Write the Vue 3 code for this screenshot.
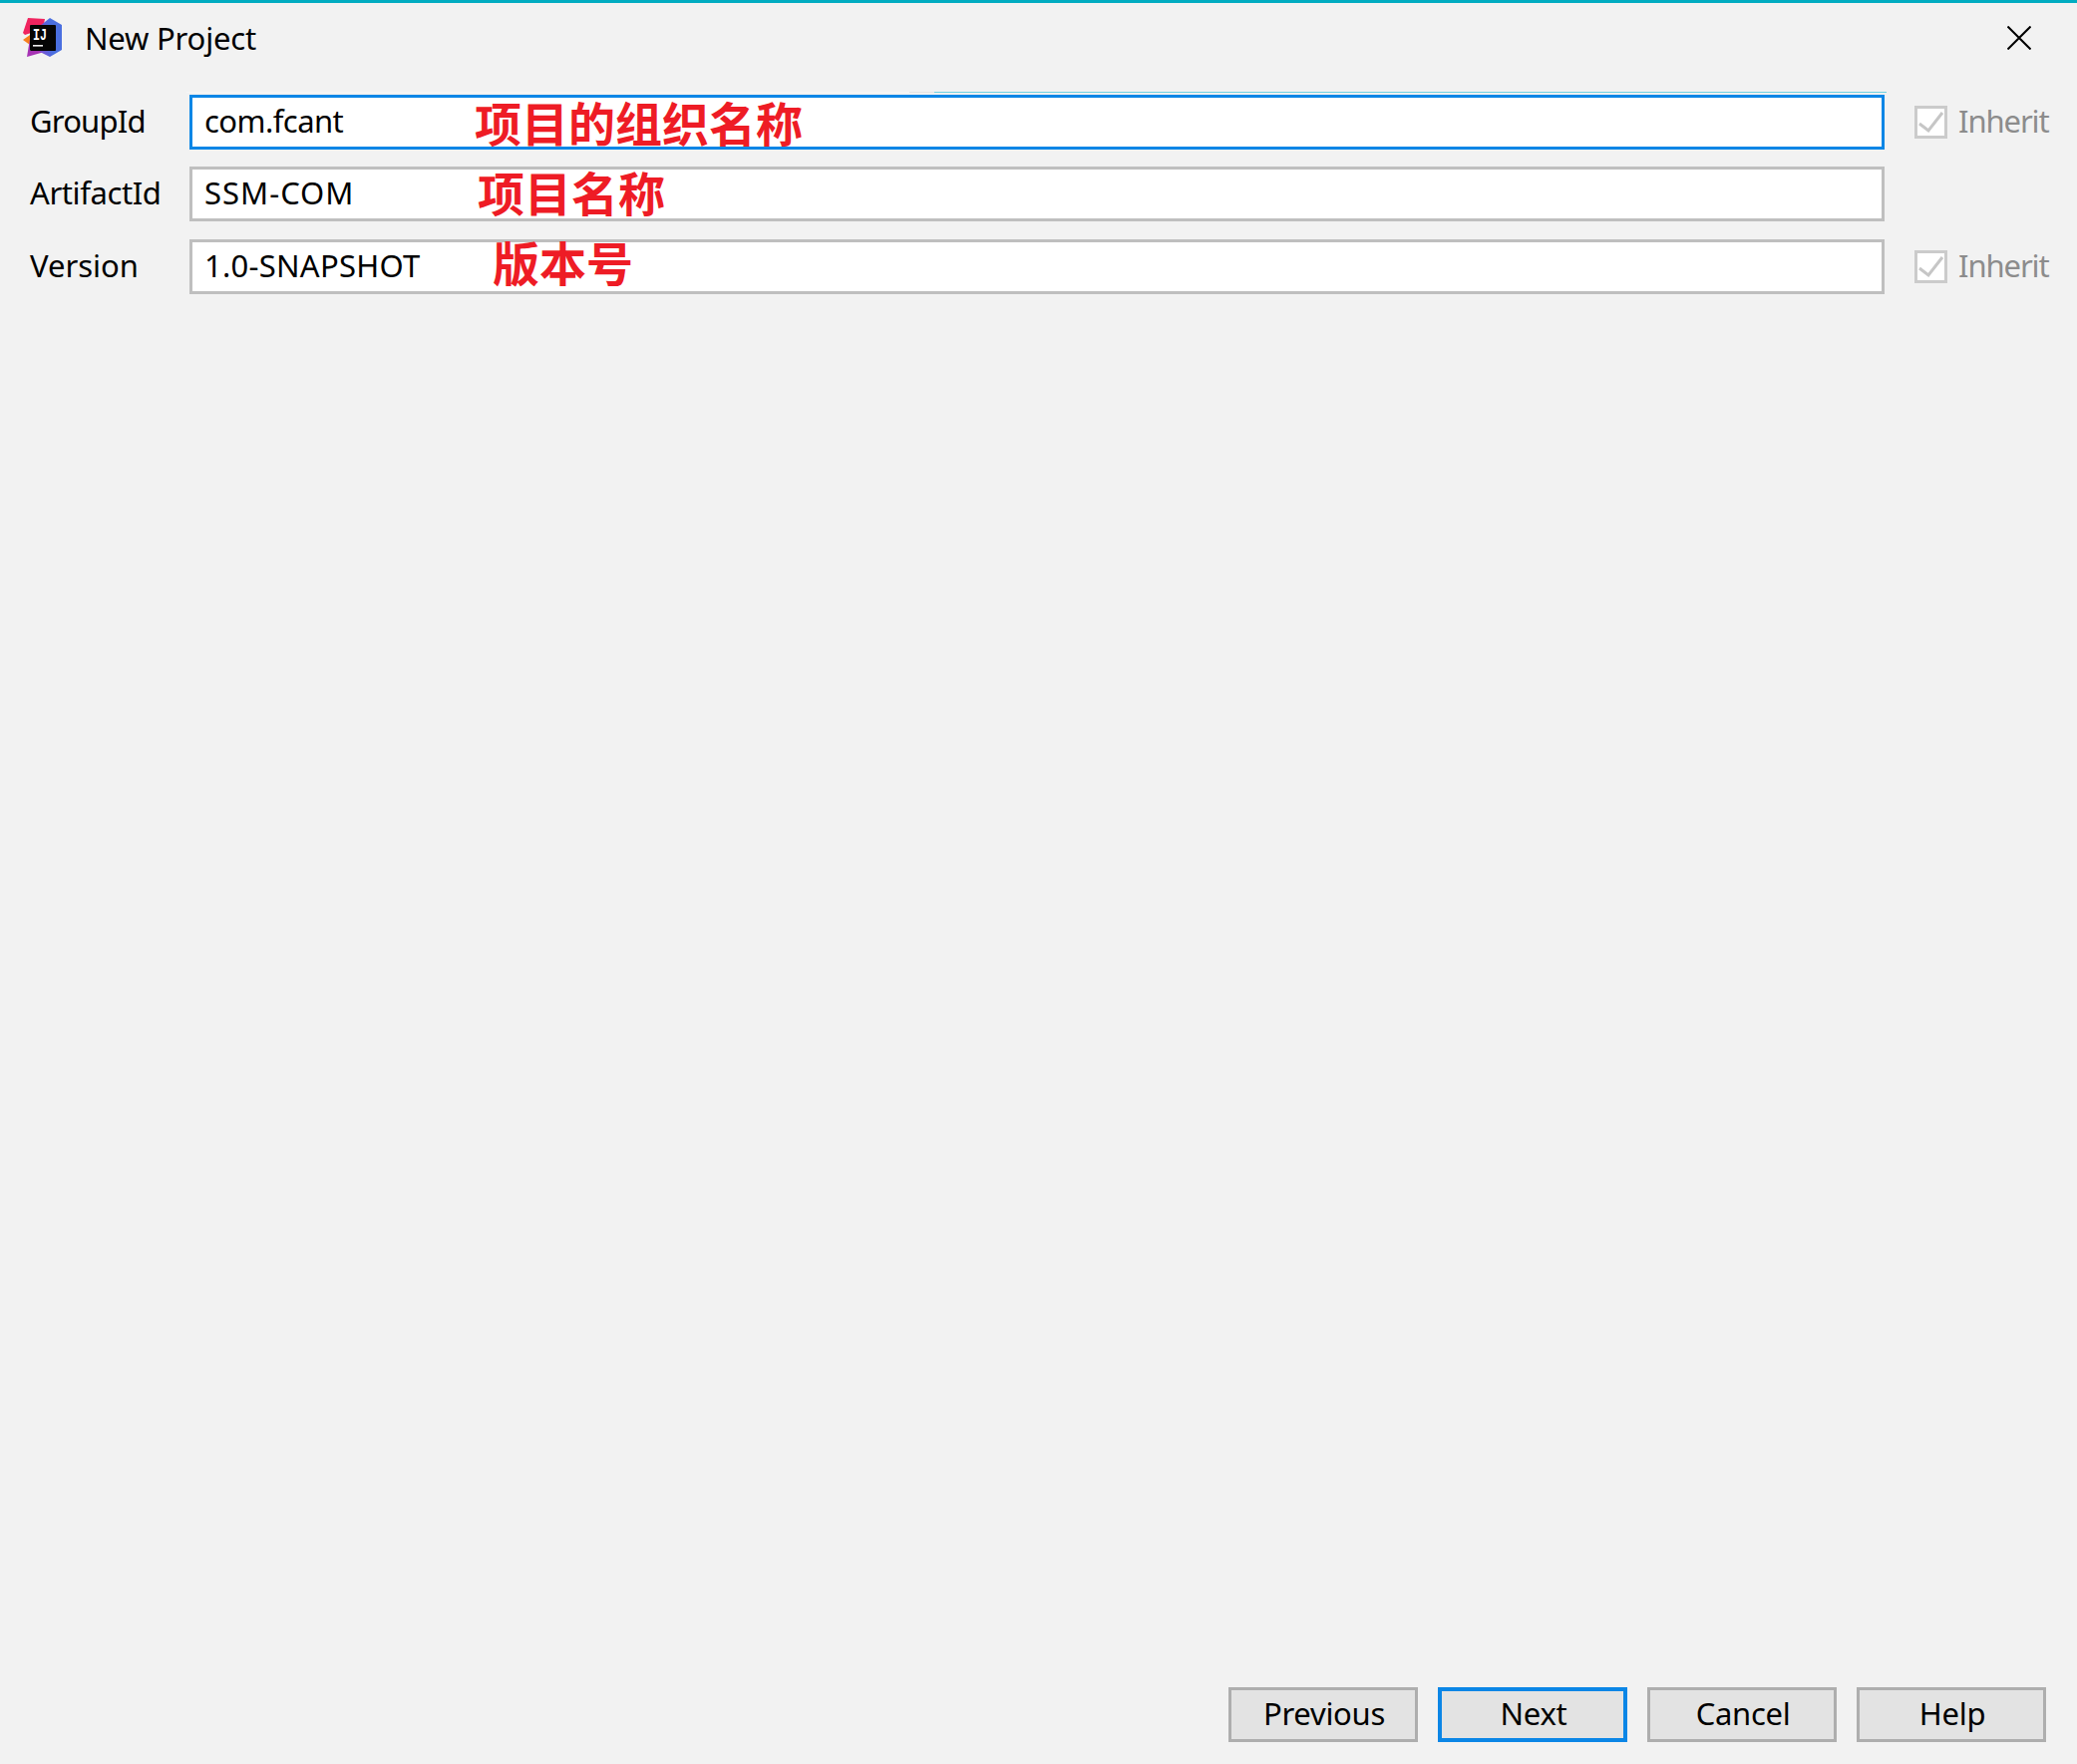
<template>
  <div class="dialog">
    <div class="titlebar">
      <svg class="logo" width="40" height="40" viewBox="0 0 40 40">
        <defs>
          <linearGradient id="ij-blue" x1="0" y1="0.6" x2="1" y2="0.4">
            <stop offset="0" stop-color="#7a4fd0" />
            <stop offset="0.5" stop-color="#4a6fe0" />
          </linearGradient>
        </defs>
        <polygon points="5,1 22,2 20,12 2,18 0,16" fill="#f0245f" />
        <polygon points="0,23 7,18 7,28" fill="#f7801e" />
        <polygon points="7,22 4,40 25,34 7,34" fill="#a633b4" />
        <polygon points="27,1 39,8 39,33 27,40 17,35 17,9" fill="url(#ij-blue)" />
        <rect x="7" y="8" width="26" height="26" rx="1" fill="#050505" />
        <text x="10" y="23" class="logo-text" textLength="14" lengthAdjust="spacingAndGlyphs">IJ</text>
        <rect x="10" y="28" width="10" height="1.6" fill="#eee" />
      </svg>
      <span class="title">New Project</span>
      <svg class="close" width="24" height="24" viewBox="0 0 24 24">
        <path d="M0.5 0.5L23.5 23.5M23.5 0.5L0.5 23.5" stroke="#000" stroke-width="2" fill="none" />
      </svg>
    </div>

    <div class="form">
      <div class="edge"></div>
      <div v-for="row in rows" :key="row.label" class="row">
        <label class="label" :class="row.labelClass">{{ row.label }}</label>
        <div class="field" :class="{ focused: row.focused }">
          <span class="value" :class="row.valueClass">{{ row.value }}</span>
          <span class="note" :style="{ left: row.noteLeft + 'px', top: row.noteTop + 'px' }">{{ row.note }}</span>
        </div>
        <div v-if="row.inherit" class="inherit">
          <svg class="check" width="33" height="33" viewBox="0 0 33 33">
            <rect x="1.5" y="1.5" width="30" height="30" fill="#fff" stroke="#cbcbcb" stroke-width="3" />
            <path d="M5 18L14 25L28 7" fill="none" stroke="#c6c6c6" stroke-width="3" />
          </svg>
          <span class="inherit-text">Inherit</span>
        </div>
      </div>
    </div>

    <div class="footer">
      <button v-for="b in buttons" :key="b" class="btn" :class="{ primary: b === 'Next' }">
        <span class="btn-text">{{ b }}</span>
      </button>
    </div>
  </div>
</template>

<script setup>
const rows = [
  { label: 'GroupId', labelClass: 'tight', value: 'com.fcant', valueClass: 'tight', note: '项目的组织名称', noteLeft: 283, noteTop: -3, inherit: true, focused: true },
  { label: 'ArtifactId', labelClass: '', value: 'SSM-COM', valueClass: 'wide', note: '项目名称', noteLeft: 286, noteTop: -5, inherit: false },
  { label: 'Version', labelClass: 'plain', value: '1.0-SNAPSHOT', valueClass: 'caps', note: '版本号', noteLeft: 301, noteTop: -8, inherit: true },
]

const buttons = ['Previous', 'Next', 'Cancel', 'Help']
</script>

<style>
html,
body {
  background: #f2f2f2;
}
</style>

<style scoped>
.dialog {
  display: flex;
  flex-direction: column;
  width: 2083px;
  height: 1769px;
  box-sizing: border-box;
  border-top: 3px solid #00acc1;
  background: #f2f2f2;
  color: #000;
  font-family: "Noto Sans", "Open Sans", sans-serif;
  font-size: 31px;
}

.titlebar {
  display: flex;
  align-items: center;
  height: 74px;
  padding: 0 46px 0 23px;
}

.logo {
  flex: none;
  margin-bottom: 6px;
}

.logo-text {
  font-family: "Liberation Mono", monospace;
  font-size: 17px;
  font-weight: 700;
  fill: #fff;
}

.title {
  margin-left: 22px;
  margin-bottom: 5px;
  letter-spacing: -0.2px;
}

.close {
  margin-left: auto;
  margin-bottom: 5px;
}

.form {
  position: relative;
  margin-top: 18px;
  padding-left: 30px;
}

.edge {
  position: absolute;
  top: -3px;
  left: 187px;
  width: 1705px;
  height: 1px;
  background: linear-gradient(to right, #f7f7f7 725px, #e4e4e4 725px, #e4e4e4 750px, #6fd1e2 750px);
}

.row {
  display: flex;
  align-items: center;
  height: 55px;
}

.row + .row {
  margin-top: 17px;
}

.row:last-child {
  margin-top: 18px;
}

.label {
  width: 160px;
  flex: none;
  padding-bottom: 3px;
  letter-spacing: -0.4px;
}

.label.tight {
  letter-spacing: -0.8px;
}

.label.plain {
  letter-spacing: 0;
}

.field {
  position: relative;
  display: flex;
  align-items: center;
  width: 1700px;
  height: 55px;
  flex: none;
  box-sizing: border-box;
  padding-left: 12px;
  border: 3px solid #bfbfbf;
  background: #fff;
}

.field.focused {
  border-color: #0b86e6;
}

.value {
  padding-bottom: 3px;
}

.value.tight {
  letter-spacing: -0.55px;
}

.value.wide {
  letter-spacing: 1px;
}

.value.caps {
  letter-spacing: 0.25px;
}

.note {
  position: absolute;
  font-family: "Noto Sans CJK SC", sans-serif;
  font-size: 47px;
  line-height: 54px;
  font-weight: 700;
  color: #ee1c25;
  white-space: nowrap;
}

.inherit {
  display: flex;
  align-items: center;
  gap: 11px;
  margin-left: 30px;
  color: #8c8c8c;
}

.inherit-text {
  padding-bottom: 3px;
  letter-spacing: -1.1px;
}

.check {
  flex: none;
}

.footer {
  display: flex;
  justify-content: flex-end;
  gap: 20px;
  margin-top: auto;
  padding: 0 31px 22px 0;
}

.btn {
  width: 190px;
  height: 55px;
  box-sizing: border-box;
  padding: 0;
  border: 3px solid #aeaeae;
  border-radius: 0;
  background: #e3e3e3;
  color: #000;
  font: inherit;
}

.btn-text {
  display: block;
  padding: 0 0 3px 2px;
  letter-spacing: -0.3px;
}

.btn.primary {
  border: 4px solid #0b86e6;
}
</style>
